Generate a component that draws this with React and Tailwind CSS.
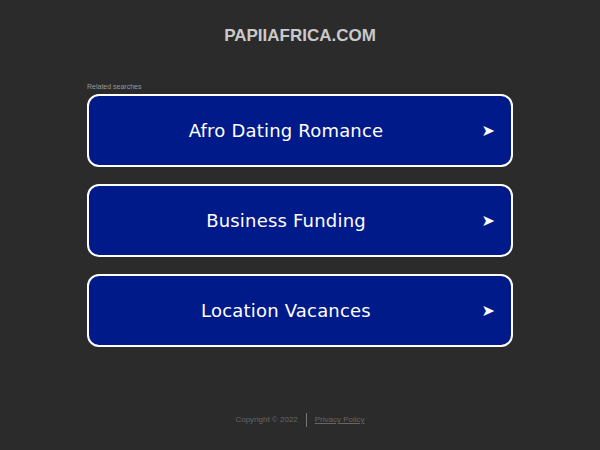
export default function App() {
    const links = ['Afro Dating Romance', 'Business Funding', 'Location Vacances'];

    return (
        <div className="w-[600px] h-[450px] bg-[#2b2b2b] flex flex-col items-center font-['Liberation_Sans',Arial,sans-serif]">
            <h1 className="mt-[26px] text-[17px] leading-[20px] font-bold text-[#c9c9c9]">PAPIIAFRICA.COM</h1>

            <div className="mt-[36px] w-[426px]">
                <p className="text-[7px] leading-[9px] text-[#999]">Related searches</p>
                <div className="mt-[3px] flex flex-col gap-[17px]">
                    {links.map(label => (
                        <a
                            key={label}
                            href="#"
                            className="relative h-[73px] rounded-[12px] border-2 border-white bg-[#001a8a] flex items-center justify-center pr-[28px]"
                        >
                            <span className="text-white text-[18px] tracking-[0.2px] font-['DejaVu_Sans',sans-serif]">{label}</span>
                            <span className="absolute right-[16px] top-1/2 -translate-y-1/2 text-white text-[16px] font-['DejaVu_Sans',sans-serif]">➤</span>
                        </a>
                    ))}
                </div>
            </div>

            <div className="mt-auto mb-[23px] flex items-center text-[8px] text-[#666]">
                <span>Copyright © 2022</span>
                <span className="mx-[8px] w-px h-[14px] bg-[#777]" />
                <a href="#" className="underline">Privacy Policy</a>
            </div>
        </div>
    );
}
